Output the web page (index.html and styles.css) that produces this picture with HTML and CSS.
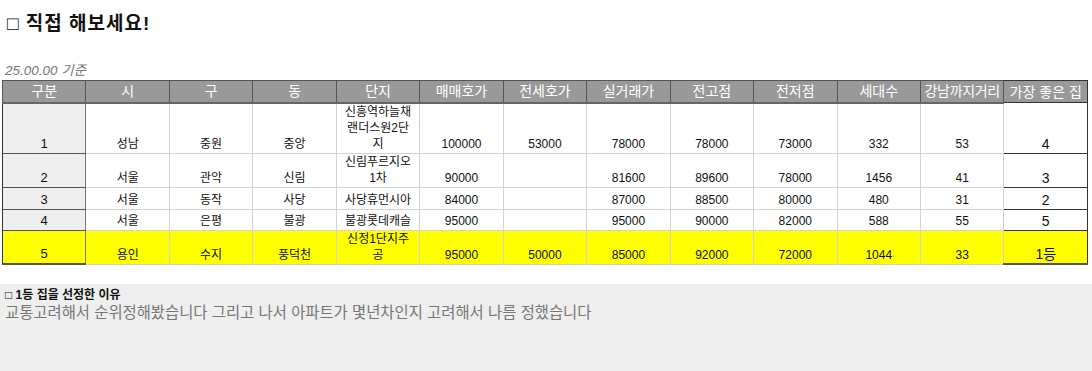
FILE: index.html
```html
<!DOCTYPE html>
<html lang="ko">
<head>
<meta charset="utf-8">
<title>직접 해보세요</title>
<link rel="stylesheet" href="styles.css">
</head>
<body>
<h3 class="title">□ 직접 해보세요!</h3>
<div class="date">25.00.00 기준</div>
<table class="grid">
  <thead>
    <tr class="h-head">
      <th class="c-no">구분</th><th>시</th><th>구</th><th>동</th><th>단지</th><th>매매호가</th><th>전세호가</th><th>실거래가</th><th>전고점</th><th>전저점</th><th>세대수</th><th class="tight">강남까지거리</th><th class="c-best">가장 좋은 집</th>
    </tr>
  </thead>
  <tbody>
    <tr class="h-3">
      <td class="c-no">1</td><td>성남</td><td>중원</td><td>중앙</td><td>신흥역하늘채<br>랜더스원2단<br>지</td><td>100000</td><td>53000</td><td>78000</td><td>78000</td><td>73000</td><td>332</td><td>53</td><td class="c-best">4</td>
    </tr>
    <tr class="h-2">
      <td class="c-no">2</td><td>서울</td><td>관악</td><td>신림</td><td>신림푸르지오<br>1차</td><td>90000</td><td></td><td>81600</td><td>89600</td><td>78000</td><td>1456</td><td>41</td><td class="c-best">3</td>
    </tr>
    <tr class="h-1">
      <td class="c-no">3</td><td>서울</td><td>동작</td><td>사당</td><td>사당휴먼시아</td><td>84000</td><td></td><td>87000</td><td>88500</td><td>80000</td><td>480</td><td>31</td><td class="c-best">2</td>
    </tr>
    <tr class="h-1b">
      <td class="c-no">4</td><td>서울</td><td>은평</td><td>불광</td><td>불광롯데캐슬</td><td>95000</td><td></td><td>95000</td><td>90000</td><td>82000</td><td>588</td><td>55</td><td class="c-best">5</td>
    </tr>
    <tr class="h-2b top">
      <td class="c-no">5</td><td>용인</td><td>수지</td><td>풍덕천</td><td>신정1단지주<br>공</td><td>95000</td><td>50000</td><td>85000</td><td>92000</td><td>72000</td><td>1044</td><td>33</td><td class="c-best">1등</td>
    </tr>
  </tbody>
</table>
<section class="reason">
  <div class="reason-title">□ 1등 집을 선정한 이유</div>
  <p class="reason-text">교통고려해서 순위정해봤습니다 그리고 나서 아파트가 몇년차인지 고려해서 나름 정했습니다</p>
</section>
</body>
</html>
```

FILE: styles.css
```css
html, body {
  margin: 0;
  padding: 0;
  background: #ffffff;
}

body {
  font-family: "Liberation Sans", "Noto Sans CJK KR", sans-serif;
  color: #000;
}

.title {
  margin: 0;
  padding: 13px 0 0 7px;
  font-size: 19px;
  line-height: 22px;
  font-weight: bold;
  letter-spacing: 1px;
  color: #111;
}

.date {
  padding: 28px 0 0 5px;
  font-size: 13.5px;
  line-height: 16px;
  font-style: italic;
  color: #777;
}

.grid {
  margin: 1px 0 0 2px;
  width: 1086px;
  table-layout: fixed;
  border-collapse: collapse;
}

.grid th {
  background: #999999;
  color: #ffffff;
  font-weight: normal;
  font-size: 14px;
  line-height: 16px;
  border: 1px solid #555;
  border-bottom: 2px solid #666;
  padding: 0;
  white-space: nowrap;
  overflow: hidden;
}

.grid th.tight {
  letter-spacing: -0.3px;
}

.grid td {
  border: 1px solid #d2d2d2;
  font-size: 12px;
  line-height: 16px;
  text-align: center;
  vertical-align: bottom;
  padding: 0 0 1px;
  color: #111;
  background: #fff;
}

.grid td.c-no {
  background: #eeeeee;
  border-left: 1px solid #333;
  border-right: 1px solid #777;
  border-bottom: 1px solid #555;
  font-size: 13px;
}

.grid .c-best {
  border: 1px solid #333;
}

.grid td.c-best {
  font-size: 14px;
}

.h-head { height: 22px; }
.h-3 { height: 50px; }
.h-2 { height: 34px; }
.h-1 { height: 22px; }
.h-1b { height: 21px; }
.h-2b { height: 33px; }

.grid tr.top td {
  background: #ffff00;
}

.grid tr.top td.c-no {
  border-bottom: 2px solid #555;
}

.grid tr.top td.c-best {
  border-bottom: 2px solid #555;
}

.reason {
  margin-top: 19px;
  background: #eeeeee;
  height: 90px;
  padding: 3px 5px 0;
  box-sizing: border-box;
}

.reason-title {
  font-size: 12px;
  line-height: 16px;
  font-weight: bold;
  color: #111;
}

.reason-text {
  margin: 1px 0 0;
  font-size: 15.4px;
  line-height: 18px;
  color: #777;
}
```
